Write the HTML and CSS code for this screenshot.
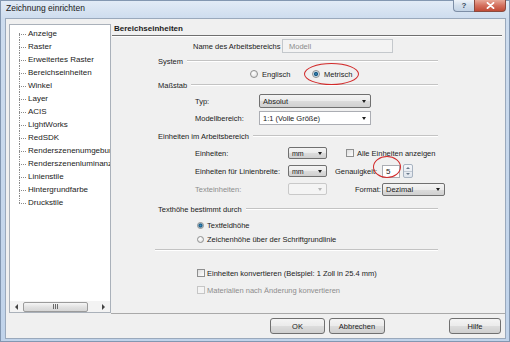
FILE: index.html
```html
<!DOCTYPE html>
<html lang="de">
<head>
    <meta charset="UTF-8">
    <title>Zeichnung einrichten</title>
    <link rel="stylesheet" href="styles.css">
</head>
<body>
    <div class="window">
        <div class="titlebar">
            <span class="title">Zeichnung einrichten</span>
            <div class="caption">
                <span class="cap-btn cap-help">?</span>
                <span class="cap-btn cap-close">
                    <svg width="9" height="7" viewBox="0 0 9 7"><path d="M1.5 0.8 L7.5 6.2 M7.5 0.8 L1.5 6.2" stroke="#fff" stroke-width="1.8" stroke-linecap="round"/></svg>
                </span>
            </div>
        </div>
        <div class="client">
            <div class="main">
                <div class="tree">
                    <ul class="tree-list">
                        <li>Anzeige</li>
                        <li>Raster</li>
                        <li>Erweitertes Raster</li>
                        <li>Bereichseinheiten</li>
                        <li>Winkel</li>
                        <li>Layer</li>
                        <li>ACIS</li>
                        <li>LightWorks</li>
                        <li>RedSDK</li>
                        <li>Renderszenenumgebung</li>
                        <li>Renderszenenluminanz</li>
                        <li>Linienstile</li>
                        <li>Hintergrundfarbe</li>
                        <li>Druckstile</li>
                    </ul>
                    <div class="hscroll">
                        <span class="sb-arrow"><i class="tri-left"></i></span>
                        <span class="sb-thumb"><i></i><i></i><i></i></span>
                        <span class="sb-arrow sb-end"><i class="tri-right"></i></span>
                    </div>
                </div>
                <div class="panel">
                    <div class="panel-head">Bereichseinheiten</div>

                    <div class="row name-row">
                        <span class="name-label">Name des Arbeitsbereichs</span>
                        <span class="edit edit-off">Modell</span>
                    </div>

                    <div class="group-title gt-system"><span>System</span></div>
                    <div class="row radio-row">
                        <span class="opt opt-en"><span class="radio"></span>Englisch</span>
                        <span class="opt opt-metric"><span class="radio checked"></span>Metrisch<span class="mark mark-metric"></span></span>
                    </div>

                    <div class="group-title gt-scale"><span>Maßstab</span></div>
                    <div class="row field-row fr-typ">
                        <span class="lbl lbl-short">Typ:</span>
                        <span class="combo combo-list combo-big">Absolut<i class="arrow"></i></span>
                    </div>
                    <div class="row field-row fr-model">
                        <span class="lbl lbl-short">Modellbereich:</span>
                        <span class="combo combo-edit combo-big">1:1 (Volle Größe)<i class="arrow"></i></span>
                    </div>

                    <div class="group-title gt-units"><span>Einheiten im Arbeitsbereich</span></div>
                    <div class="row field-row fr-units">
                        <span class="lbl lbl-long">Einheiten:</span>
                        <span class="combo combo-list combo-mm">mm<i class="arrow"></i></span>
                        <span class="check-inline"><span class="checkbox"></span>Alle Einheiten anzeigen</span>
                    </div>
                    <div class="row field-row fr-lw">
                        <span class="lbl lbl-long">Einheiten für Linienbreite:</span>
                        <span class="combo combo-list combo-mm">mm<i class="arrow"></i></span>
                        <span class="lbl lbl-prec">Genauigkeit:</span>
                        <span class="spin-wrap">
                            <span class="edit edit-num">5</span>
                            <span class="mark mark-prec"></span>
                        </span>
                        <span class="spin"><span><i class="tri-up"></i></span><span><i class="tri-down"></i></span></span>
                    </div>
                    <div class="row field-row fr-text">
                        <span class="lbl lbl-long">Texteinheiten:</span>
                        <span class="combo combo-off combo-mm"><i class="arrow"></i></span>
                        <span class="lbl lbl-format">Format:</span>
                        <span class="combo combo-list combo-fmt">Dezimal<i class="arrow"></i></span>
                    </div>

                    <div class="group-title gt-height"><span>Texthöhe bestimmt durch</span></div>
                    <div class="row opt-row or-1"><span class="radio checked"></span>Textfeldhöhe</div>
                    <div class="row opt-row or-2"><span class="radio"></span>Zeichenhöhe über der Schriftgrundlinie</div>

                    <div class="separator"></div>

                    <div class="row opt-row cr-1"><span class="checkbox"></span>Einheiten konvertieren (Beispiel: 1 Zoll in 25.4 mm)</div>
                    <div class="row opt-row cr-2 off"><span class="checkbox checkbox-off"></span>Materialien nach Änderung konvertieren</div>
                </div>
            </div>
            <div class="footer">
                <span class="btn btn-ok">OK</span>
                <span class="btn btn-cancel">Abbrechen</span>
                <span class="btn btn-help">Hilfe</span>
            </div>
        </div>
    </div>
</body>
</html>
```

FILE: styles.css
```css
* {
    box-sizing: border-box;
}
body {
    margin: 0;
    overflow: hidden;
    font-family: "Liberation Sans", Arial, sans-serif;
    color: #1b1b1b;
}
.window {
    width: 510px;
    height: 342px;
    display: flex;
    flex-direction: column;
    padding: 0 3px 2px 4px;
    border: 1px solid #8397b1;
    background: linear-gradient(#e2ebf6, #cddcee 18px, #c0d3ea);
}
.titlebar {
    height: 17px;
    display: flex;
    align-items: flex-start;
    flex-shrink: 0;
}
.title {
    padding-left: 1px;
    font-size: 8.5px;
    line-height: 15px;
    color: #202020;
}
.caption {
    margin-left: auto;
    margin-top: -1px;
    display: flex;
}
.cap-btn {
    height: 12px;
    display: flex;
    align-items: center;
    justify-content: center;
    border: 1px solid #7d8ea6;
    border-top: none;
}
.cap-help {
    width: 21px;
    border-right: none;
    border-bottom-left-radius: 4px;
    background: linear-gradient(#eef3f9, #d3dfec 50%, #c3d3e5);
    font-size: 8px;
    font-weight: bold;
    color: #3a4a60;
}
.cap-close {
    width: 32px;
    border-color: #8b4a3e;
    border-bottom-right-radius: 4px;
    background: linear-gradient(#e8a898, #d4705e 50%, #c14b36);
}
.client {
    flex: 1;
    display: flex;
    flex-direction: column;
    border: 1px solid #9aa9bc;
    background: #f0f0f0;
}
.main {
    display: flex;
    padding: 5px 0 0 3px;
}

/* tree */
.tree {
    width: 102px;
    height: 289px;
    display: flex;
    flex-direction: column;
    border: 1px solid #aab1ba;
    background: #fff;
}
.tree-list {
    flex: 1;
    margin: 0;
    padding: 2px 0 0;
    list-style: none;
    overflow: hidden;
}
.tree-list li {
    position: relative;
    height: 13px;
    padding-left: 18px;
    font-size: 8px;
    line-height: 13px;
    white-space: nowrap;
    color: #1a1a1a;
}
.tree-list li::before {
    content: "";
    position: absolute;
    left: 9px;
    top: 7px;
    width: 7px;
    border-top: 1px dotted #8a8a8a;
}
.tree-list li::after {
    content: "";
    position: absolute;
    left: 9px;
    top: 0;
    height: 13px;
    border-left: 1px dotted #8a8a8a;
}
.tree-list li:first-child::after {
    top: 6px;
    height: 7px;
}
.tree-list li:last-child::after {
    height: 7px;
}
.hscroll {
    height: 11px;
    display: flex;
    align-items: center;
    background: #f3f3f3;
}
.sb-arrow {
    width: 13px;
    display: flex;
    justify-content: center;
}
.sb-end {
    margin-left: auto;
}
.tri-left {
    border-top: 3px solid transparent;
    border-bottom: 3px solid transparent;
    border-right: 3px solid #444;
}
.tri-right {
    border-top: 3px solid transparent;
    border-bottom: 3px solid transparent;
    border-left: 3px solid #444;
}
.sb-thumb {
    width: 65px;
    height: 10px;
    display: flex;
    align-items: center;
    justify-content: center;
    gap: 1px;
    border: 1px solid #9b9b9b;
    border-radius: 2px;
    background: linear-gradient(#f6f6f6, #e2e2e2 50%, #d6d6d6);
}
.sb-thumb i {
    width: 1px;
    height: 5px;
    background: #6a6a6a;
}

/* right panel */
.panel {
    flex: 1;
    height: 290px;
    display: flex;
    flex-direction: column;
    border-bottom: 1px solid #a9a9a9;
    font-size: 7.5px;
}
.panel-head {
    height: 12px;
    margin: 0 3px 0 1px;
    padding-left: 2px;
    flex-shrink: 0;
    font-size: 8px;
    font-weight: bold;
    line-height: 9px;
    border-bottom: 1px solid #6f6f6f;
    box-shadow: 0 1px 0 #fff;
}
.row {
    display: flex;
    align-items: center;
    flex-shrink: 0;
}
.name-row {
    margin-top: 3px;
    height: 14px;
    padding-left: 82px;
}
.name-label {
    width: 89px;
}
.edit {
    display: flex;
    align-items: center;
    border: 1px solid #abadb3;
    background: #fff;
}
.edit-off {
    width: 111px;
    height: 14px;
    padding-left: 6px;
    border-color: #c4c8cc;
    background: #f3f3f3;
    color: #8c8c8c;
}
.group-title {
    height: 10px;
    display: flex;
    align-items: center;
    flex-shrink: 0;
    padding: 0 67px 0 47px;
}
.group-title::after {
    content: "";
    flex: 1;
    margin-left: 4px;
    border-top: 1px solid #c3c3c3;
    border-bottom: 1px solid #fff;
}
.gt-system { margin-top: 3px; }
.gt-scale { margin-top: 1px; }
.gt-units { margin-top: 6px; }
.gt-height { margin-top: 9px; }

.radio-row {
    margin-top: 3px;
    height: 10px;
    padding-left: 139px;
}
.opt {
    position: relative;
    display: flex;
    align-items: center;
    height: 10px;
}
.opt-en {
    width: 62px;
}
.radio {
    width: 8px;
    height: 8px;
    margin-right: 4px;
    flex-shrink: 0;
    border: 1px solid #8e8f8f;
    border-radius: 50%;
    background: radial-gradient(circle at 40% 35%, #fff, #dadada);
}
.radio.checked {
    background: radial-gradient(circle, #3d8fc4 0, #1b5a82 1.6px, #cfe3ef 2.6px, #e8e8e8 4px);
}
.mark {
    position: absolute;
    border: 1.5px solid #d22a2a;
    border-radius: 50%;
    pointer-events: none;
}
.mark-metric {
    left: -8px;
    top: -6px;
    width: 55px;
    height: 22px;
}

.field-row {
    padding-left: 84px;
}
.fr-typ { margin-top: 4px; height: 14px; }
.fr-model { margin-top: 3px; height: 14px; }
.fr-units { margin-top: 6px; height: 12px; }
.fr-lw { margin-top: 6px; height: 12px; }
.fr-text { margin-top: 6px; height: 12px; }
.lbl {
    flex-shrink: 0;
    white-space: nowrap;
}
.lbl-short { width: 64px; }
.lbl-long { width: 93px; }
.lbl-prec { width: 47px; margin-left: 8px; }
.lbl-format { width: 27px; margin-left: 28px; }
.fr-text .lbl-long { color: #8d8d8d; }

.combo {
    display: flex;
    align-items: center;
    flex-shrink: 0;
    padding-left: 3px;
    border: 1px solid #707070;
    border-radius: 2px;
    white-space: nowrap;
}
.combo-list {
    background: linear-gradient(#f4f4f4, #ebebeb 50%, #dcdcdc 50%, #d0d0d0);
}
.combo-edit {
    border-color: #abadb3;
    border-radius: 0;
    background: #fff;
}
.combo-off {
    border-color: #c9c9c9;
    background: #f4f4f4;
}
.combo-big { width: 112px; height: 14px; }
.combo-mm { width: 39px; height: 12px; font-size: 7px; }
.combo-fmt { width: 63px; height: 13px; }
.arrow {
    margin-left: auto;
    margin-right: 4px;
    border-left: 2.5px solid transparent;
    border-right: 2.5px solid transparent;
    border-top: 3px solid #1e1e1e;
}
.combo-off .arrow {
    border-top-color: #b5b5b5;
}
.check-inline {
    display: flex;
    align-items: center;
    margin-left: 19px;
}
.checkbox {
    width: 8px;
    height: 8px;
    margin-right: 3px;
    flex-shrink: 0;
    border: 1px solid #8e8f8f;
    background: linear-gradient(135deg, #dcdcdc, #fff);
}
.checkbox-off {
    border-color: #c6c6c6;
    background: #f4f4f4;
}
.spin-wrap {
    position: relative;
    display: flex;
}
.edit-num {
    width: 18px;
    height: 13px;
    padding-left: 3px;
    font-size: 8px;
}
.mark-prec {
    left: -9px;
    top: -9px;
    width: 28px;
    height: 22px;
}
.spin {
    width: 10px;
    height: 14px;
    margin-left: 3px;
    display: flex;
    flex-direction: column;
    border: 1px solid #a8b3c1;
    border-radius: 2px;
    background: linear-gradient(#f5f7fa, #dfe5ec);
}
.spin span {
    flex: 1;
    display: flex;
    align-items: center;
    justify-content: center;
}
.spin span + span {
    border-top: 1px solid #c2cad4;
}
.tri-up {
    border-left: 2px solid transparent;
    border-right: 2px solid transparent;
    border-bottom: 2px solid #6b7a8c;
}
.tri-down {
    border-left: 2px solid transparent;
    border-right: 2px solid transparent;
    border-top: 2px solid #6b7a8c;
}

.opt-row {
    height: 10px;
    padding-left: 86px;
}
.opt-row .radio {
    width: 7px;
    height: 7px;
    margin-right: 3px;
}
.opt-row .checkbox {
    margin-right: 2px;
}
.or-1 { margin-top: 6px; }
.or-2 { margin-top: 4px; }
.cr-1 { margin-top: 17px; }
.cr-2 { margin-top: 7px; }
.off { color: #8d8d8d; }
.separator {
    flex-shrink: 0;
    margin: 5px 67px 0 44px;
    border-top: 1px solid #c3c3c3;
    border-bottom: 1px solid #fff;
}

/* footer buttons */
.footer {
    display: flex;
    padding: 4px 4px 0 264px;
}
.btn {
    height: 16px;
    display: flex;
    align-items: center;
    justify-content: center;
    border: 1px solid #707070;
    border-radius: 3px;
    background: linear-gradient(#f4f4f4, #ebebeb 50%, #dddddd 50%, #cfcfcf);
    font-size: 7.5px;
    color: #1b1b1b;
}
.btn-ok { width: 55px; }
.btn-cancel { width: 56px; margin-left: 4px; }
.btn-help { width: 52px; margin-left: auto; }
```
